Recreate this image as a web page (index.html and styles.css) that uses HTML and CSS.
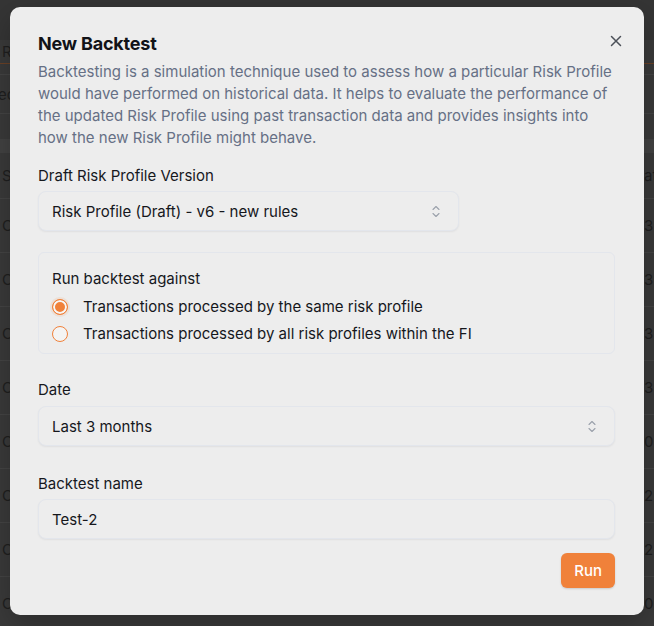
FILE: index.html
```html
<!DOCTYPE html>
<html lang="en">
<head>
<meta charset="utf-8">
<title>New Backtest</title>
<link rel="stylesheet" href="styles.css">
</head>
<body>
<div class="page">
  <div class="topbar"></div>
  <div class="tabs"><span class="tab">R</span></div>
  <div class="subrow"></div>
  <div class="bgrow bgrow-tall"><span class="bg-left bg-shift">ec</span></div>
  <div class="bgspacer"></div>
  <div class="bgband"></div>
  <div class="bgrow bgrow-head"><span class="bg-left">S</span><span class="bg-right">at</span></div>
  <div class="bgrow"><span class="bg-left">C</span><span class="bg-right">3%</span></div>
  <div class="bgrow"><span class="bg-left">C</span><span class="bg-right">3%</span></div>
  <div class="bgrow"><span class="bg-left">C</span><span class="bg-right">3%</span></div>
  <div class="bgrow"><span class="bg-left">C</span><span class="bg-right">3%</span></div>
  <div class="bgrow"><span class="bg-left">C</span><span class="bg-right">0%</span></div>
  <div class="bgrow"><span class="bg-left">C</span><span class="bg-right">2%</span></div>
  <div class="bgrow"><span class="bg-left">C</span><span class="bg-right">2%</span></div>
  <div class="bgrow"><span class="bg-left">C</span><span class="bg-right">0%</span></div>
</div>

<div class="modal" role="dialog" aria-labelledby="modal-title">
  <button class="close" aria-label="Close">
    <svg width="12" height="12" viewBox="0 0 12 12" fill="none"><path d="M1.5 1.5L10.5 10.5M10.5 1.5L1.5 10.5" stroke="#4b5058" stroke-width="1.5" stroke-linecap="round"/></svg>
  </button>
  <h2 class="title" id="modal-title">New Backtest</h2>
  <p class="desc">Backtesting is a simulation technique used to assess how a particular Risk Profile would have performed on historical data. It helps to evaluate the performance of the updated Risk Profile using past transaction data and provides insights into how the new Risk Profile might behave.</p>

  <div class="field field-first">
    <div class="label">Draft Risk Profile Version</div>
    <div class="select select-narrow">
      <span>Risk Profile (Draft) - v6 - new rules</span>
      <svg class="chev" width="8" height="13" viewBox="0 0 8 13" fill="none"><path d="M1 4.5L4 1.5L7 4.5M1 8.5L4 11.5L7 8.5" stroke="#9ba1ab" stroke-width="1.1" stroke-linecap="round" stroke-linejoin="round"/></svg>
    </div>
  </div>

  <div class="fieldset">
    <div class="label">Run backtest against</div>
    <div class="radios">
      <label class="radio-row"><span class="radio radio-on"></span><span>Transactions processed by the same risk profile</span></label>
      <label class="radio-row"><span class="radio"></span><span>Transactions processed by all risk profiles within the FI</span></label>
    </div>
  </div>

  <div class="field field-date">
    <div class="label">Date</div>
    <div class="select select-date">
      <span>Last 3 months</span>
      <svg class="chev" width="8" height="13" viewBox="0 0 8 13" fill="none"><path d="M1 4.5L4 1.5L7 4.5M1 8.5L4 11.5L7 8.5" stroke="#9ba1ab" stroke-width="1.1" stroke-linecap="round" stroke-linejoin="round"/></svg>
    </div>
  </div>

  <div class="field field-name">
    <div class="label">Backtest name</div>
    <div class="select input"><span>Test-2</span></div>
  </div>

  <div class="actions">
    <button class="run">Run</button>
  </div>
</div>
</body>
</html>
```

FILE: styles.css
```css
* { box-sizing: border-box; }
html, body { margin: 0; padding: 0; }
body {
  width: 654px;
  height: 626px;
  overflow: hidden;
  background: #3a3a3a;
  font-family: Inter, "Noto Sans", "Liberation Sans", sans-serif;
  position: relative;
}

/* dimmed page behind the dialog */
.page {
  display: flex;
  flex-direction: column;
  color: #1f1f1f;
  font-size: 15px;
}
.topbar { height: 40px; background: #353535; }
.tabs {
  height: 24px;
  border-bottom: 1px solid #6a4126;
  display: flex;
  align-items: center;
  padding-left: 2px;
  background: #3a3a3a;
}
.subrow { height: 11px; border-bottom: 1px solid #444; }
.bgrow {
  height: 54px;
  border-bottom: 1px solid #444;
  display: flex;
  align-items: center;
  justify-content: space-between;
  padding-left: 2px;
  white-space: nowrap;
  overflow: hidden;
}
.bg-shift { margin-left: -4px; }
.bgrow-tall { height: 39px; }
.bgrow-head { height: 46px; }
.bgspacer { height: 25px; }
.bgband { height: 14px; background: #424242; }
.bg-right { width: 10px; overflow: visible; }

/* dialog */
.modal {
  position: absolute;
  left: 10px;
  top: 7px;
  width: 634px;
  height: 608px;
  background: #ededed;
  border-radius: 10px;
  padding: 23px 29px 27px 28px;
  display: flex;
  flex-direction: column;
  box-shadow: 0 10px 30px rgba(0,0,0,0.25);
}
.close {
  position: absolute;
  top: 28px;
  right: 22px;
  width: 12px;
  height: 12px;
  padding: 0;
  border: 0;
  background: none;
  display: flex;
}
.title {
  margin: 0;
  font-size: 18px;
  line-height: 28px;
  font-weight: 700;
  color: #111318;
  letter-spacing: -0.2px;
}
.desc {
  margin: 3px 0 0;
  font-size: 15px;
  line-height: 22px;
  color: #667085;
}
.field { display: flex; flex-direction: column; }
.field-first { margin-top: 16px; }
.field-date { margin-top: 25px; }
.field-name { margin-top: 27px; }
.label {
  font-size: 15px;
  line-height: 22px;
  color: #16181d;
}
.select {
  margin-top: 4px;
  height: 40px;
  border: 1px solid #e3e6ec;
  border-radius: 8px;
  background: #ededed;
  box-shadow: 0 1px 2px rgba(16,24,40,0.06);
  display: flex;
  align-items: center;
  justify-content: space-between;
  padding: 0 18px 0 13px;
  font-size: 15px;
  color: #15171c;
}
.select-narrow { width: 421px; }
.select-date { margin-top: 5px; }
.chev { flex: none; }

.fieldset {
  margin-top: 21px;
  border: 1px solid #e3e6ec;
  border-radius: 6px;
  padding: 15px 13px 6px;
}
.radios { margin-top: 3px; display: flex; flex-direction: column; }
.radio-row {
  height: 27px;
  display: flex;
  align-items: center;
  gap: 15px;
  font-size: 15px;
  color: #15171c;
}
.radio {
  width: 16px;
  height: 16px;
  border-radius: 50%;
  border: 1.5px solid #f0813a;
  background: #f4f4f4;
  flex: none;
}
.radio-on {
  background: #f0813a;
  box-shadow: inset 0 0 0 2px #f7f7f7, 0 0 0 2px rgba(240,129,58,0.12);
}

.actions {
  margin-top: 14px;
  display: flex;
  justify-content: flex-end;
}
.run {
  height: 35px;
  padding: 0 13px;
  border: 0;
  border-radius: 6px;
  background: #f0813a;
  color: #fff;
  font-family: inherit;
  font-size: 15px;
  font-weight: 500;
  box-shadow: 0 1px 2px rgba(0,0,0,0.15);
}
```
